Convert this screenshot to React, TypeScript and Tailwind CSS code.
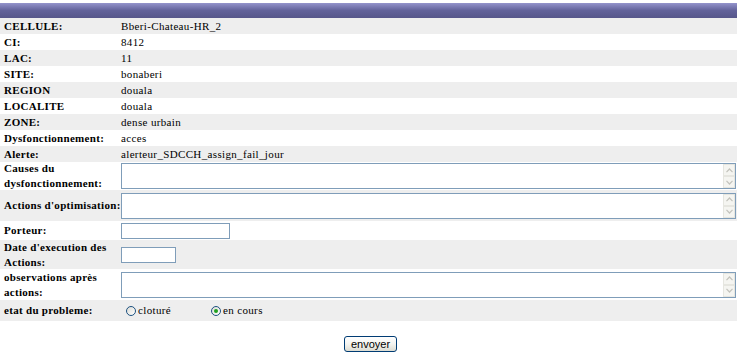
import React from 'react';

interface RowProps {
  label: React.ReactNode;
  gray?: boolean;
  h: string;
  children?: React.ReactNode;
}

const Row: React.FC<RowProps> = ({ label, gray, h, children }) => (
  <div className={`flex items-center ${h} ${gray ? 'bg-[#eeeeee]' : 'bg-white'}`}>
    <div className="w-[118px] shrink-0 pl-[4px] font-bold leading-[15px] tracking-[0.3px] whitespace-nowrap text-black">
      {label}
    </div>
    <div className="flex-1 flex items-center pl-[3px] text-black">{children}</div>
  </div>
);

const Chevron = ({ up }: { up?: boolean }) => (
  <svg width="7" height="5" viewBox="0 0 7 5" fill="none" stroke="#c3c3bd" strokeWidth="1.2">
    {up ? <path d="M0.5 4.2 L3.5 1 L6.5 4.2" /> : <path d="M0.5 0.8 L3.5 4 L6.5 0.8" />}
  </svg>
);

const TextArea = () => (
  <div className="w-[615px] h-[26px] border border-[#7f9db9] bg-white flex justify-end">
    <div className="w-[12px] flex flex-col">
      <div className="flex-1 flex items-center justify-center bg-[#f5f5f1] border border-[#e6e6e0]">
        <Chevron up />
      </div>
      <div className="flex-1 flex items-center justify-center bg-[#f5f5f1] border border-[#e6e6e0]">
        <Chevron />
      </div>
    </div>
  </div>
);

const Radio = ({ checked }: { checked?: boolean }) => (
  <span className="w-[10px] h-[10px] rounded-full border border-[#1c5180] bg-gradient-to-br from-[#dcdcd6] to-white flex items-center justify-center">
    {checked && <span className="w-[4px] h-[4px] rounded-full bg-[#21a121]" />}
  </span>
);

const info: [string, string][] = [
  ['CELLULE:', 'Bberi-Chateau-HR_2'],
  ['CI:', '8412'],
  ['LAC:', '11'],
  ['SITE:', 'bonaberi'],
  ['REGION', 'douala'],
  ['LOCALITE', 'douala'],
  ['ZONE:', 'dense urbain'],
  ['Dysfonctionnement:', 'acces'],
  ['Alerte:', 'alerteur_SDCCH_assign_fail_jour'],
];

export default function App() {
  return (
    <div className="w-[744px] h-[353px] bg-white pt-[3px] text-[11px] [font-family:'Liberation_Serif','Times_New_Roman',serif]">
      <div className="w-[737px]">
        <div className="h-[15px] bg-gradient-to-b from-[#9494cc] via-[#62629a] to-[#56568a]" />
        {info.map(([label, value], i) => (
          <Row key={label} label={label} gray={i % 2 === 0} h="h-[16px]">
            <span className="leading-[15px] tracking-[0.35px]">{value}</span>
          </Row>
        ))}
        <Row label={<>Causes du<br />dysfonctionnement:</>} h="h-[28px]">
          <TextArea />
        </Row>
        <Row label="Actions d'optimisation:" gray h="h-[31px]">
          <TextArea />
        </Row>
        <Row label="Porteur:" h="h-[19px]">
          <div className="w-[109px] h-[16px] border border-[#7f9db9] bg-white" />
        </Row>
        <Row label={<>Date d'execution des<br />Actions:</>} gray h="h-[29px]">
          <div className="w-[55px] h-[16px] border border-[#7f9db9] bg-white" />
        </Row>
        <Row label={<>observations après<br />actions:</>} h="h-[31px]">
          <TextArea />
        </Row>
        <Row label="etat du probleme:" gray h="h-[21px]">
          <div className="flex items-center pl-[5px] tracking-[0.35px]">
            <Radio />
            <span className="ml-[2px]">cloturé</span>
          </div>
          <div className="flex items-center ml-[40px] tracking-[0.35px]">
            <Radio checked />
            <span className="ml-[2px]">en cours</span>
          </div>
        </Row>
      </div>
      <div className="pt-[15px] pl-[344px]">
        <button className="w-[53px] h-[16px] rounded-[3px] border border-[#003c74] bg-gradient-to-b from-white via-[#f4f4f0] to-[#dcdcd2] text-[11px] leading-[12px] text-black [font-family:'Liberation_Sans',Arial,sans-serif]">
          envoyer
        </button>
      </div>
    </div>
  );
}
